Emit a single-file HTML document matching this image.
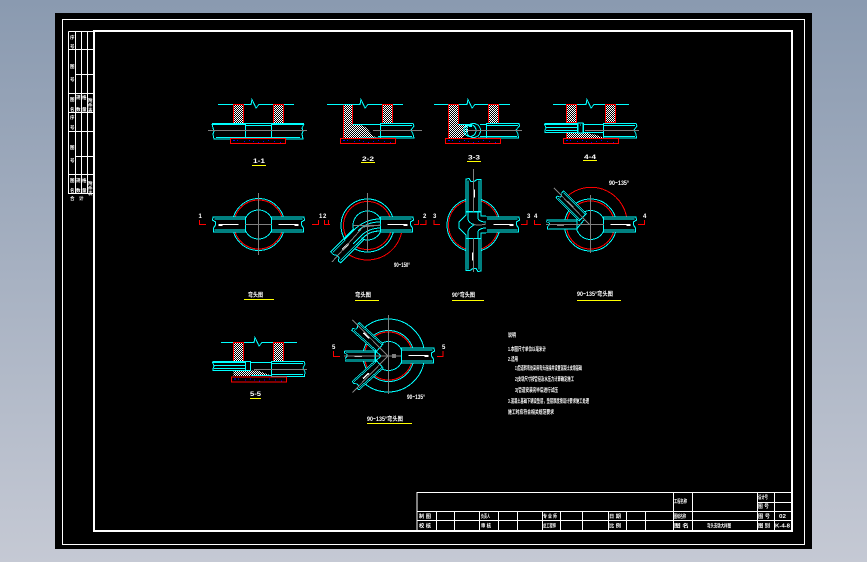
<!DOCTYPE html>
<html><head><meta charset="utf-8"><style>
html,body{margin:0;padding:0;width:867px;height:562px;overflow:hidden;background:linear-gradient(#8a9ab0,#c5c9d4)}
svg{position:absolute;left:0;top:0;display:block}
text{font-family:"Liberation Sans","Noto Sans CJK SC",sans-serif;fill:#fff;font-weight:bold}
.c{stroke:#0ff;fill:none;stroke-width:1}
.r{stroke:#f00;fill:none;stroke-width:1}
.g{stroke:#808080;fill:none;stroke-width:1}
.w{stroke:#fff;fill:none;stroke-width:1}
.y{stroke:#ff0;fill:none;stroke-width:1}
</style></head><body>
<svg width="867" height="562" viewBox="0 0 867 562" shape-rendering="crispEdges">
<defs>
<pattern id="h" width="2" height="2" patternUnits="userSpaceOnUse"><rect width="2" height="2" fill="#000"/><rect x="0" y="0" width="1" height="1" fill="#fff"/><rect x="1" y="1" width="1" height="1" fill="#fff"/></pattern>
<g id="pipeN">
<path d="M0 0H32.5L33 3 30 5V8L32 11V15H0Z" fill="#000" stroke="#0ff"/>
<path class="c" d="M0 2H31M0 13H31M0 0V15"/>
</g>
<g id="pipe">
<use href="#pipeN"/>
<path class="w" d="M7 7.5H27M23 8.5H27"/>
</g>
<g id="pipeS">
<use href="#pipeN"/>
<path class="w" d="M14 7.5H22M14 8.5H22"/>
</g>
<g id="brk"><path class="c" d="M-37 0H-4L-3 -5 1 3.500 4 0H39"/></g>
<g id="bed"><rect x="0.500" y="0.500" width="55" height="5" fill="#000" stroke="#f00"/><path stroke="#00f" stroke-width="1" d="M3 2.500h2M7 2.500h1M14 3.500h1M19 2.500h1M23 3.500h1M28 4.500h1M33 3.500h1M38 2.500h1M44 3.500h1M50 4.500h1"/></g>
</defs>

<rect x="55" y="13" width="757" height="536" fill="#000"/>
<rect x="62.500" y="19.500" width="742" height="525" class="w"/>
<rect x="94" y="31" width="698" height="500" fill="none" stroke="#fff" stroke-width="2"/>

<!-- left table -->
<path class="w" d="M68.500 31.500V193.500H94M75.500 31.500V193.500M81.500 31.500V193.500M87.500 31.500V193.500M68.500 31.500H94M68.500 49.500H94M75.500 74.500H94M68.500 93.500H94M68.500 112.500H94M68.500 131.500H94M75.500 156.500H94M68.500 174.500H94"/>
<g font-size="4.500">
<text x="70" y="39">序</text><text x="70" y="48">号</text><text x="70" y="68">图</text><text x="70" y="81">号</text>
<text x="70" y="101">图</text><text x="70" y="111">名</text><text x="76" y="99">规</text><text x="82" y="99">格</text><text x="76" y="111">数</text><text x="82" y="111">量</text>
<text x="70" y="119">序</text><text x="70" y="129">号</text><text x="70" y="149">图</text><text x="70" y="162">号</text>
<text x="70" y="182">图</text><text x="70" y="192">名</text><text x="76" y="182">规</text><text x="82" y="182">格</text><text x="76" y="192">数</text><text x="82" y="192">量</text>
<text x="88" y="102">附</text><text x="88" y="107">件</text><text x="88" y="112">表</text>
<text x="88" y="185">附</text><text x="88" y="190">件</text><text x="88" y="195">表</text>
<text x="70" y="200">合</text><text x="79" y="200">计</text>
</g>

<!-- 1-1 -->
<use href="#brk" x="255" y="104.500"/>
<rect x="233.500" y="104.500" width="10" height="19" fill="url(#h)" stroke="#f00"/>
<rect x="273.500" y="104.500" width="10" height="19" fill="url(#h)" stroke="#f00"/>
<path class="c" d="M212 123.500H304M212 124.500H245M271 124.500H304M245 125.500H271M245.500 124V138M271.500 124V138M212 124L213 128 214 131 213 134 214 139H303L302 134 303 131 302 128 304 124M216 137.500H300"/>
<path class="g" d="M208 130.500H307"/>
<use href="#bed" x="230" y="138"/>

<!-- 2-2 -->
<use href="#brk" x="364" y="104.500"/>
<path d="M343.500 104.500H352.500V124.500H360L365 127 369 131 372 135 377 138H343.500Z" fill="url(#h)" stroke="none"/>
<path class="r" d="M343.500 104.500V138M352.500 104.500V124"/>
<path class="c" d="M352.500 104.500H343.500M353 124.500H381"/>
<rect x="382.500" y="104.500" width="10" height="19" fill="url(#h)" stroke="#f00"/>
<path class="c" d="M380.500 123.500H413L414 126 411 130 413 134 414 138H360M380.500 125.500H412M380.500 123V138M378 136.500H412"/>
<path class="g" d="M373 130.500H421"/>
<use href="#bed" x="340" y="138"/>

<!-- 3-3 -->
<use href="#brk" x="471" y="104.500"/>
<path d="M448.500 104.500H458.500V124.500H468V132L462 138H448.500Z" fill="url(#h)"/>
<path class="r" d="M448.500 104.500V138M458.500 104.500V124M448.500 104.500H458.500"/>
<rect x="488.500" y="104.500" width="10" height="19" fill="url(#h)" stroke="#f00"/>
<path class="c" d="M458 124.500H470M480 124.500H486"/>
<ellipse class="c" cx="473.500" cy="130.500" rx="7" ry="7"/>
<ellipse class="c" cx="470" cy="130.500" rx="6" ry="6"/>
<rect x="469" y="124" width="3" height="3" fill="#0ff"/>
<path class="c" d="M486.500 123.500H519L519.500 126 516 130 518 134 518.500 138H478M486.500 125.500H518M486.500 123V138M480 136.500H517"/>
<path class="g" d="M420 130.500H422M467 130.500H522"/>
<use href="#bed" x="445" y="138"/>

<!-- 4-4 -->
<use href="#brk" x="590" y="104.500"/>
<rect x="566.500" y="104.500" width="10" height="18" fill="url(#h)" stroke="#f00"/>
<rect x="605.500" y="104.500" width="10" height="18" fill="url(#h)" stroke="#f00"/>
<path d="M566.500 132.500H585L596 135 604 138H566.500Z" fill="url(#h)"/>
<path class="r" d="M566.500 132V138"/>
<path class="c" d="M544.500 123.500H577M544.500 124.500H577M546 127.500H577M546 130.500H577M544.500 132.500H577M544.500 124L546 128 545 130 545 133M577.500 123V133M583.500 123V133M579 123H582M579 133H582M580 125H581M583 124.500H604M583 132.500H604"/>
<rect x="578" y="123" width="5" height="10" fill="none" stroke="#0ff"/>
<path class="c" d="M603.500 123.500H636L637 126 634 130 636 134 636.500 138H603.500ZM603.500 125.500H635M603.500 136.500H635"/>
<path class="g" d="M585 130.500H639"/>
<use href="#bed" x="563" y="138"/>

<!-- labels sections -->
<g font-size="6">
<text x="253" y="163" textLength="12" lengthAdjust="spacingAndGlyphs">1-1</text>
<text x="362" y="161" textLength="12" lengthAdjust="spacingAndGlyphs">2-2</text>
<text x="468" y="159.500" textLength="12" lengthAdjust="spacingAndGlyphs">3-3</text>
<text x="584" y="159" textLength="12" lengthAdjust="spacingAndGlyphs">4-4</text>
<text x="250" y="396" textLength="11" lengthAdjust="spacingAndGlyphs">5-5</text>
</g>
<path class="y" d="M252 165.500H266M361 162.500H375M467 161.500H481M583 160.500H597M244 299.500H274M355 300.500H379M452 300.500H484M577 300.500H621M250 398.500H261M367 423.500H412"/>

<!-- plan 1 -->
<circle class="c" cx="258.500" cy="224.500" r="26"/>
<circle class="r" cx="258.500" cy="224.500" r="24.500"/>
<circle class="c" cx="258.500" cy="224.500" r="14.500"/>
<use href="#pipe" x="271.500" y="217"/>
<use href="#pipe" transform="translate(245.500 217) scale(-1 1)"/>
<path class="g" d="M258.500 193V255M245 224.500H272"/>
<path class="r" d="M199.500 220V224.500H206M318.500 220V224.500H312M324.500 220V224.500H330"/>
<!-- plan 2 -->
<path class="r" d="M401.500 233A35 35 0 0 1 344 251"/>
<circle class="c" cx="367.500" cy="225.500" r="26.500"/>
<circle class="r" cx="367.500" cy="225.500" r="24"/>
<circle class="c" cx="367.500" cy="225.500" r="14.500"/>
<use href="#pipe" x="380.500" y="217"/>
<g transform="translate(367 226) rotate(135) translate(12 -7.500)"><use href="#pipeS"/></g>
<path d="M380 219 C370 219 362 222 355 229 L345 240 L352 247 L364 235 C370 231 375 231 380 231Z" fill="#000"/>
<path class="c" d="M380 219C369 219 361 223 354 230L344 240M380 222C370 222 364 225 358 231M380 228C373 228 368 230 363 234L353 244M380 231C373 231 368 233 364 237L356 245"/>
<path class="g" d="M353 225.500H380M367.500 193V252M381 225L363 227 332 262"/>
<path class="r" d="M328.500 220V224.500H324M418.500 220V224.500H414"/>
<!-- plan 3 -->
<circle class="c" cx="473.500" cy="225" r="26.500"/>
<circle class="r" cx="473.500" cy="225" r="25"/>
<use href="#pipeS" transform="translate(466 211.500) rotate(-90) scale(1 1)"/>
<use href="#pipeS" transform="translate(481 238.500) rotate(90)"/>
<use href="#pipe" x="486.500" y="217"/>
<path d="M459 225L466 212H481V217H487V232H481V238H466Z" fill="#000"/>
<path class="c" d="M466 212V215L459 222V228L466 235V238.500M481 212V216H486M481 238.500V233H486M468 212V219C468 222 472 224 474 225C472 226 468 228 468 232V238M478 212V218C478 220 481 222 486 222M478 238V232C478 230 481 228 486 228M466 212H481M466 238.500H481"/>
<path class="g" d="M473.500 169V212M473.500 238V272M473 224C478 226 481 225 486 224"/>
<path class="r" d="M434 220V224.500H440M521 224.500H527V220M426 220V224.500H420"/>
<!-- plan 4 -->
<path class="r" d="M566.500 197A36 36 0 0 1 627 226"/>
<circle class="c" cx="590.500" cy="225" r="26"/>
<circle class="r" cx="590.500" cy="225" r="24"/>
<circle class="c" cx="590.500" cy="225" r="14.500"/>
<use href="#pipe" x="603.500" y="217"/>
<g transform="translate(590.500 225) rotate(225) translate(11 -5) scale(1 .67)"><use href="#pipeS"/></g>
<use href="#pipeS" transform="translate(577 220) scale(-.92 .62)"/>
<path class="c" d="M577 228.500L584 220"/>
<path class="g" d="M590.500 195V253M546 224.500H604M554 188L590 225"/>
<path class="r" d="M534.500 220V224.500H541M644.500 220V224.500H638"/>

<!-- plan 5 -->
<path class="c" d="M364 328A36.500 36.500 0 1 1 361 380"/>
<circle class="r" cx="388.500" cy="356" r="24"/>
<circle class="c" cx="388.500" cy="356" r="25.500"/>
<circle class="c" cx="388.500" cy="356" r="14.500"/>
<use href="#pipe" x="401.500" y="348"/>
<g transform="translate(388.500 356) rotate(222) translate(12 -5.500) scale(1 .73)"><use href="#pipeS"/></g>
<g transform="translate(388.500 356) rotate(138) translate(12 -5.500) scale(1 .73)"><use href="#pipeS"/></g>
<use href="#pipeS" transform="translate(375 351) scale(-.93 .67)"/>
<path class="c" d="M375.500 351V361L381 356Z"/>
<path class="g" d="M388.500 315V394M344 356H401M352.500 320L388 356 352.500 392.500"/>
<rect x="392" y="354" width="4" height="4" fill="#808080"/>
<path class="r" d="M333.500 351V356.500H340M443 351V356.500H437"/>

<!-- 5-5 -->
<use href="#brk" x="258" y="342.500"/>
<rect x="233.500" y="342.500" width="10" height="19" fill="url(#h)" stroke="#f00"/>
<rect x="273.500" y="342.500" width="10" height="19" fill="url(#h)" stroke="#f00"/>
<path d="M233.500 370.500H258L272 376H233.500Z" fill="url(#h)"/>
<path class="c" d="M212.500 361.500H245M212.500 362.500H245M214 365.500H245M214 368.500H245M212.500 370.500H245M212.500 362L214 366 213 369V370.500M245.500 361V371M250.500 361V371M251 362.500H272M251 375.500H272"/>
<rect x="245.500" y="361.500" width="5" height="9" fill="none" stroke="#0ff"/>
<path class="c" d="M271.500 361.500H304L305 364 303 368 305 372 304.500 376.500H271.500ZM271.500 363.500H303M271.500 374.500H303"/>
<path class="g" d="M254 369.500H307"/>
<use href="#bed" x="231" y="376.500"/>

<!-- plan labels -->
<g font-size="6">
<text x="198.500" y="218">1</text><text x="319" y="218">1</text><text x="323" y="218">2</text>
<text x="423" y="218">2</text><text x="433" y="218">3</text><text x="527" y="218">3</text><text x="534" y="218">4</text><text x="643" y="218">4</text>
<text x="332" y="349">5</text><text x="442" y="349">5</text>
</g>
<g font-size="6">
<text x="248" y="297" textLength="15" lengthAdjust="spacingAndGlyphs">弯头图</text>
<text x="355" y="297" textLength="16" lengthAdjust="spacingAndGlyphs">弯头图</text>
<text x="452" y="297" textLength="23" lengthAdjust="spacingAndGlyphs">90°弯头图</text>
<text x="577" y="296" textLength="36" lengthAdjust="spacingAndGlyphs">90~135°弯头图</text>
<text x="367" y="421" textLength="36" lengthAdjust="spacingAndGlyphs">90~135°弯头图</text>
<text x="394" y="267" textLength="16" lengthAdjust="spacingAndGlyphs">90~150°</text>
<text x="609" y="185" textLength="20" lengthAdjust="spacingAndGlyphs">90~135°</text>
<text x="407" y="399" textLength="18" lengthAdjust="spacingAndGlyphs">90~135°</text>
</g>

<!-- notes -->
<g font-size="5.500">
<text x="508" y="337" textLength="8" lengthAdjust="spacingAndGlyphs">说明</text>
<text x="508" y="351" textLength="38" lengthAdjust="spacingAndGlyphs">1.本图尺寸单位以毫米计</text>
<text x="508" y="361" textLength="10" lengthAdjust="spacingAndGlyphs">2.适用</text>
<text x="515" y="370" textLength="67" lengthAdjust="spacingAndGlyphs">1)管道转弯处采用弯头连接并设置混凝土支墩基础</text>
<text x="515" y="381" textLength="59" lengthAdjust="spacingAndGlyphs">2)支墩尺寸按管径及水压力计算确定施工</text>
<text x="515" y="392" textLength="43" lengthAdjust="spacingAndGlyphs">3)管道安装完毕后进行试压</text>
<text x="508" y="403" textLength="81" lengthAdjust="spacingAndGlyphs">3.混凝土基础下铺设垫层，垫层厚度按设计要求施工处理</text>
<text x="508" y="414" textLength="46" lengthAdjust="spacingAndGlyphs">施工时应符合相关规范要求</text>
</g>

<!-- title block -->
<rect x="417" y="492.500" width="375" height="38" fill="none" stroke="#fff"/>
<path class="w" d="M417 511.500H792M417 520.500H792M757 502.500H792M673.500 492V531M692.500 492V531M757.500 492V531M774.500 492V531M436.500 511V531M454.500 511V531M479.500 511V531M498.500 511V531M517.500 511V531M542.500 511V531M560.500 511V531M582.500 511V531M608.500 511V531M626.500 511V531M645.500 511V531"/>
<g font-size="5" xml:space="preserve">
<text x="674" y="503" textLength="13" lengthAdjust="spacingAndGlyphs">工程名称</text>
<text x="758" y="499" textLength="10" lengthAdjust="spacingAndGlyphs">设计号</text>
<text x="758" y="508" textLength="11" lengthAdjust="spacingAndGlyphs">图 号</text>
<text x="419" y="518" textLength="12" lengthAdjust="spacingAndGlyphs">制 图</text>
<text x="419" y="527.500" textLength="12" lengthAdjust="spacingAndGlyphs">校 核</text>
<text x="481" y="518" textLength="9" lengthAdjust="spacingAndGlyphs">负责人</text>
<text x="481" y="527.500" textLength="10" lengthAdjust="spacingAndGlyphs">审 核</text>
<text x="543" y="518" textLength="14" lengthAdjust="spacingAndGlyphs">专 业 师</text>
<text x="543" y="527.500" textLength="13" lengthAdjust="spacingAndGlyphs">总工程师</text>
<text x="609" y="518" textLength="12" lengthAdjust="spacingAndGlyphs">日 期</text>
<text x="609" y="527.500" textLength="12" lengthAdjust="spacingAndGlyphs">比 例</text>
<text x="674" y="518" textLength="12" lengthAdjust="spacingAndGlyphs">图纸名称</text>
<text x="674" y="527.500" textLength="15" lengthAdjust="spacingAndGlyphs">图 名</text>
<text x="707" y="527.500" textLength="24" lengthAdjust="spacingAndGlyphs">弯头支墩大样图</text>
<text x="758" y="518" textLength="12" lengthAdjust="spacingAndGlyphs">图 号</text>
<text x="758" y="527.500" textLength="12" lengthAdjust="spacingAndGlyphs">图 别</text>
<text x="779" y="518" textLength="7" lengthAdjust="spacingAndGlyphs">02</text>
<text x="775" y="527.500" textLength="15" lengthAdjust="spacingAndGlyphs">K-4-8</text>
</g>
</svg>
</body></html>
